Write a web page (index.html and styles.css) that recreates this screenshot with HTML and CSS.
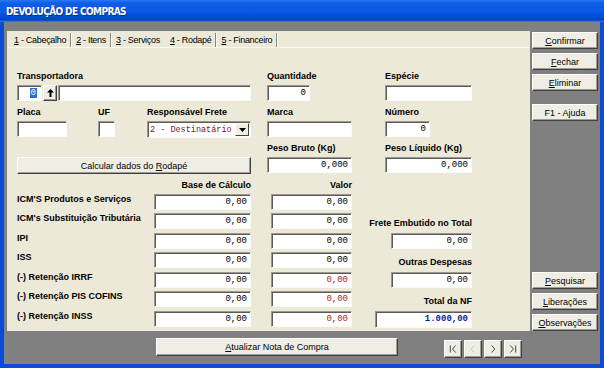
FILE: index.html
```html
<!DOCTYPE html>
<html lang="pt-BR">
<head>
  <meta charset="UTF-8" />
  <meta name="viewport" content="width=device-width, initial-scale=1.0"/>
  <title>Devolução de Compras</title>
  <link rel="stylesheet" href="styles.css">
</head>
<body>
  <div class="window">
    <div class="titlebar">DEVOLUÇÃO DE COMPRAS</div>
    <div class="client">
      <div class="main">
        <div class="panel">
          <div class="tabs">
            <span class="tab"><u>1</u> - Cabeçalho</span>
            <span class="tab"><u>2</u> - Itens</span>
            <span class="tab tab-nosep"><u>3</u> - Serviços</span>
            <span class="tab tab-active"><u>4</u> - Rodapé</span>
            <span class="tab"><u>5</u> - Financeiro</span>
          </div>

          <div class="page">
            <div class="top">
              <div class="col col-a">
                <div class="field">
                  <label class="lbl">Transportadora</label>
                  <div class="inline">
                    <div class="edit edit-code"><span class="sel">0</span></div>
                    <button class="btn btn-up">
                      <svg width="7" height="8" viewBox="0 0 7 8"><polygon points="3.5,0 7,3.5 4.5,3.5 4.5,8 2.5,8 2.5,3.5 0,3.5" fill="#000"/></svg>
                    </button>
                    <input class="edit edit-grow" type="text" value="">
                  </div>
                </div>
                <div class="inline fields-row">
                  <div class="field w-placa">
                    <label class="lbl">Placa</label>
                    <input class="edit" type="text" value="">
                  </div>
                  <div class="field w-uf">
                    <label class="lbl">UF</label>
                    <input class="edit" type="text" value="">
                  </div>
                  <div class="field w-resp">
                    <label class="lbl">Responsável Frete</label>
                    <div class="combo">
                      <span class="combo-text">2 - Destinatário</span>
                      <span class="combo-drop">
                        <svg width="7" height="4" viewBox="0 0 7 4"><polygon points="0,0 7,0 3.5,4" fill="#000"/></svg>
                      </span>
                    </div>
                  </div>
                </div>
                <button class="btn btn-calc">Calcular dados do <u>R</u>odapé</button>
              </div>

              <div class="col col-b">
                <div class="field">
                  <label class="lbl">Quantidade</label>
                  <input class="edit edit-qtd" type="text" value="0">
                </div>
                <div class="field">
                  <label class="lbl">Marca</label>
                  <input class="edit" type="text" value="">
                </div>
                <div class="field">
                  <label class="lbl">Peso Bruto (Kg)</label>
                  <input class="edit" type="text" value="0,000">
                </div>
              </div>

              <div class="col col-c">
                <div class="field">
                  <label class="lbl">Espécie</label>
                  <input class="edit" type="text" value="">
                </div>
                <div class="field">
                  <label class="lbl">Número</label>
                  <input class="edit edit-num" type="text" value="0">
                </div>
                <div class="field">
                  <label class="lbl">Peso Líquido (Kg)</label>
                  <input class="edit" type="text" value="0,000">
                </div>
              </div>
            </div>

            <div class="values">
              <span class="lbl head c2">Base de Cálculo</span>
              <span class="lbl head c3">Valor</span>

              <span class="lbl r1">ICM'S Produtos e Serviços</span>
              <input class="edit base r1" type="text" value="0,00">
              <input class="edit valor r1" type="text" value="0,00">

              <span class="lbl r2">ICM's Substituição Tributária</span>
              <input class="edit base r2" type="text" value="0,00">
              <input class="edit valor r2" type="text" value="0,00">

              <span class="lbl r3">IPI</span>
              <input class="edit base r3" type="text" value="0,00">
              <input class="edit valor r3" type="text" value="0,00">

              <span class="lbl r4">ISS</span>
              <input class="edit base r4" type="text" value="0,00">
              <input class="edit valor r4" type="text" value="0,00">

              <span class="lbl r5">(-) Retenção IRRF</span>
              <input class="edit base r5" type="text" value="0,00">
              <input class="edit valor red r5" type="text" value="0,00">

              <span class="lbl r6">(-) Retenção PIS COFINS</span>
              <input class="edit base r6" type="text" value="0,00">
              <input class="edit valor red r6" type="text" value="0,00">

              <span class="lbl r7">(-) Retenção INSS</span>
              <input class="edit base r7" type="text" value="0,00">
              <input class="edit valor red r7" type="text" value="0,00">

              <span class="lbl side-lbl r2">Frete Embutido no Total</span>
              <input class="edit side-edit r3" type="text" value="0,00">
              <span class="lbl side-lbl r4">Outras Despesas</span>
              <input class="edit side-edit r5" type="text" value="0,00">
              <span class="lbl side-lbl r6">Total da NF</span>
              <input class="edit side-edit total r7" type="text" value="1.000,00">
            </div>
          </div>
        </div>

        <div class="side">
          <div class="side-group">
            <button class="btn"><u>C</u>onfirmar</button>
            <button class="btn"><u>F</u>echar</button>
            <button class="btn"><u>E</u>liminar</button>
            <button class="btn btn-help">F1 - Ajuda</button>
          </div>
          <div class="side-group">
            <button class="btn"><u>P</u>esquisar</button>
            <button class="btn"><u>L</u>iberações</button>
            <button class="btn"><u>O</u>bservações</button>
          </div>
        </div>
      </div>

      <div class="footer">
        <button class="btn btn-update"><u>A</u>tualizar Nota de Compra</button>
        <div class="nav">
          <button class="btn btn-nav"><svg width="18" height="18" viewBox="0 0 18 18"><path d="M6 5v8M12 5L8.5 9 12 13" fill="none" stroke="#333" stroke-width="1"/></svg></button>
          <button class="btn btn-nav"><svg width="18" height="18" viewBox="0 0 18 18"><path d="M10.5 5L7 9l3.5 4" fill="none" stroke="#c4c2b8" stroke-width="1"/></svg></button>
          <button class="btn btn-nav"><svg width="18" height="18" viewBox="0 0 18 18"><path d="M7.5 5L11 9l-3.5 4" fill="none" stroke="#333" stroke-width="1"/></svg></button>
          <button class="btn btn-nav"><svg width="18" height="18" viewBox="0 0 18 18"><path d="M6 5l3.5 4L6 13M12 5v8" fill="none" stroke="#333" stroke-width="1"/></svg></button>
        </div>
      </div>
    </div>
  </div>
</body>
</html>
```

FILE: styles.css
```css
* {
  box-sizing: border-box;
}

body {
  margin: 0;
  font-family: "Liberation Sans", Arial, sans-serif;
  font-size: 9px;
  color: #000;
}

.window {
  width: 604px;
  height: 368px;
  display: flex;
  flex-direction: column;
  background: #0b4bd8;
}

.titlebar {
  height: 22px;
  padding-left: 6px;
  line-height: 23px;
  color: #fff;
  font-family: "DejaVu Sans Condensed", "DejaVu Sans", sans-serif;
  font-stretch: condensed;
  font-weight: bold;
  font-size: 10px;
  letter-spacing: -0.6px;
  text-shadow: 1px 1px 0 #0a2d8f;
  background: linear-gradient(to bottom, #2b78f2 0, #0d5ee8 3px, #0858e2 12px, #0049cf 18px, #003fc0 20px, #3a86f5 22px);
}

.client {
  flex: 1;
  margin: 0 4px 4px;
  background: #808080;
  display: flex;
  flex-direction: column;
}

.main {
  display: flex;
  padding-top: 9px;
}

.panel {
  width: 523px;
  height: 300px;
  margin-left: 3px;
  background: #ece9d8;
}

/* abas */
.tabs {
  display: flex;
  height: 17px;
  padding-left: 3px;
  border-bottom: 1px solid #f8f7f0;
}

.tab {
  height: 14px;
  margin-top: 2px;
  margin-right: 1px;
  padding: 0 4px;
  line-height: 14px;
  letter-spacing: -0.3px;
  border-right: 1px solid #8a887e;
  box-shadow: 1px 0 0 #fff;
  white-space: nowrap;
}

.tab-nosep {
  border-right-color: transparent;
  box-shadow: none;
}

.page {
  padding: 23px 0 0 10px;
}

.top {
  display: flex;
  align-items: flex-start;
}

.col {
  display: flex;
  flex-direction: column;
  gap: 6px;
}

.col-a {
  width: 234px;
}

.col-b {
  width: 85px;
  margin-left: 16px;
}

.col-c {
  width: 87px;
  margin-left: 33px;
}

.field {
  display: flex;
  flex-direction: column;
}

.lbl {
  display: block;
  font-weight: bold;
  font-size: 9px;
  line-height: 11px;
  margin-bottom: 3px;
  white-space: nowrap;
}

.inline {
  display: flex;
  gap: 1px;
  align-items: flex-start;
}

.fields-row {
  gap: 0;
}

.w-placa { width: 50px; }
.w-uf { width: 17px; margin-left: 31px; }
.w-resp { width: 104px; margin-left: 32px; }

.edit {
  display: block;
  width: 100%;
  height: 16px;
  margin: 0;
  padding: 0 3px;
  background: #fff;
  border: 1px solid;
  border-color: #9a9890 #fbfbf8 #fbfbf8 #9a9890;
  box-shadow: inset 1px 1px 0 #5c5b55;
  font-family: "Liberation Mono", "Courier New", monospace;
  font-size: 9px;
  text-align: right;
  color: #000;
  outline: none;
}

.edit-qtd { width: 43px; }
.edit-num { width: 45px; }

.edit-code {
  width: 25px;
  flex: none;
  display: flex;
  align-items: center;
  justify-content: flex-end;
  padding-right: 4px;
}

.sel {
  background: #316ac5;
  color: #fff;
  line-height: 10px;
  padding: 0 1px;
}

.edit-grow {
  flex: 1;
  width: auto;
}

.combo {
  display: flex;
  height: 17px;
  background: #fff;
  border: 1px solid;
  border-color: #9a9890 #fbfbf8 #fbfbf8 #9a9890;
  box-shadow: inset 1px 1px 0 #5c5b55;
  padding: 1px 1px 1px 2px;
}

.combo-text {
  flex: 1;
  overflow: hidden;
  font-family: "Liberation Mono", "Courier New", monospace;
  font-size: 8.5px;
  line-height: 14px;
  color: #7a1818;
  white-space: nowrap;
}

.combo-drop {
  width: 14px;
  flex: none;
  display: flex;
  align-items: center;
  justify-content: center;
  background: #efede4;
  border: 1px solid;
  border-color: #fff #404040 #404040 #fff;
}

/* botões */
.btn {
  display: block;
  height: 17px;
  padding: 0;
  background: #efede4;
  border: 1px solid;
  border-color: #fff #404040 #404040 #fff;
  box-shadow: inset -1px -1px 0 #a09e94;
  font-family: "Liberation Sans", Arial, sans-serif;
  font-size: 9px;
  color: #000;
  cursor: pointer;
  white-space: nowrap;
}

.btn-up {
  width: 14px;
  height: 16px;
  display: flex;
  align-items: center;
  justify-content: center;
}

.btn-calc {
  width: 234px;
  margin-top: 13px;
}

/* valores */
.values {
  display: grid;
  grid-template-columns: 137px 97px 101px 120px;
  grid-template-rows: 10px repeat(7, 16px);
  row-gap: 3.5px;
  margin-top: 6px;
}

.values .lbl {
  margin: 0;
  line-height: 11px;
}

.head { grid-row: 1; justify-self: end; line-height: 10px; }
.c2 { grid-column: 2; }
.c3 { grid-column: 3; }

.r1 { grid-row: 2; }
.r2 { grid-row: 3; }
.r3 { grid-row: 4; }
.r4 { grid-row: 5; }
.r5 { grid-row: 6; }
.r6 { grid-row: 7; }
.r7 { grid-row: 8; }

.base {
  grid-column: 2;
}

.valor {
  grid-column: 3;
  width: 81px;
  justify-self: end;
}

.red {
  color: #b02424;
}

.side-lbl {
  grid-column: 4;
  justify-self: end;
  align-self: end;
}

.side-edit {
  grid-column: 4;
  width: 81px;
  justify-self: end;
}

.total {
  width: 97px;
  height: 17px;
  color: #0d1a96;
  font-weight: bold;
}

/* coluna lateral */
.side {
  width: 66px;
  height: 300px;
  margin-left: 2px;
  padding-top: 1px;
  display: flex;
  flex-direction: column;
  justify-content: space-between;
}

.side-group {
  display: flex;
  flex-direction: column;
  gap: 4px;
}

.side .btn {
  width: 66px;
}

.btn-help {
  margin-top: 9px;
}

/* rodapé */
.footer {
  display: flex;
  align-items: flex-start;
  padding: 7px 0 0 152px;
}

.btn-update {
  width: 242px;
  height: 18px;
}

.nav {
  display: flex;
  gap: 2px;
  margin: 2px 0 0 46px;
}

.btn-nav {
  width: 18px;
  height: 18px;
  display: flex;
  align-items: center;
  justify-content: center;
}

.btn-nav svg {
  display: block;
}
```
